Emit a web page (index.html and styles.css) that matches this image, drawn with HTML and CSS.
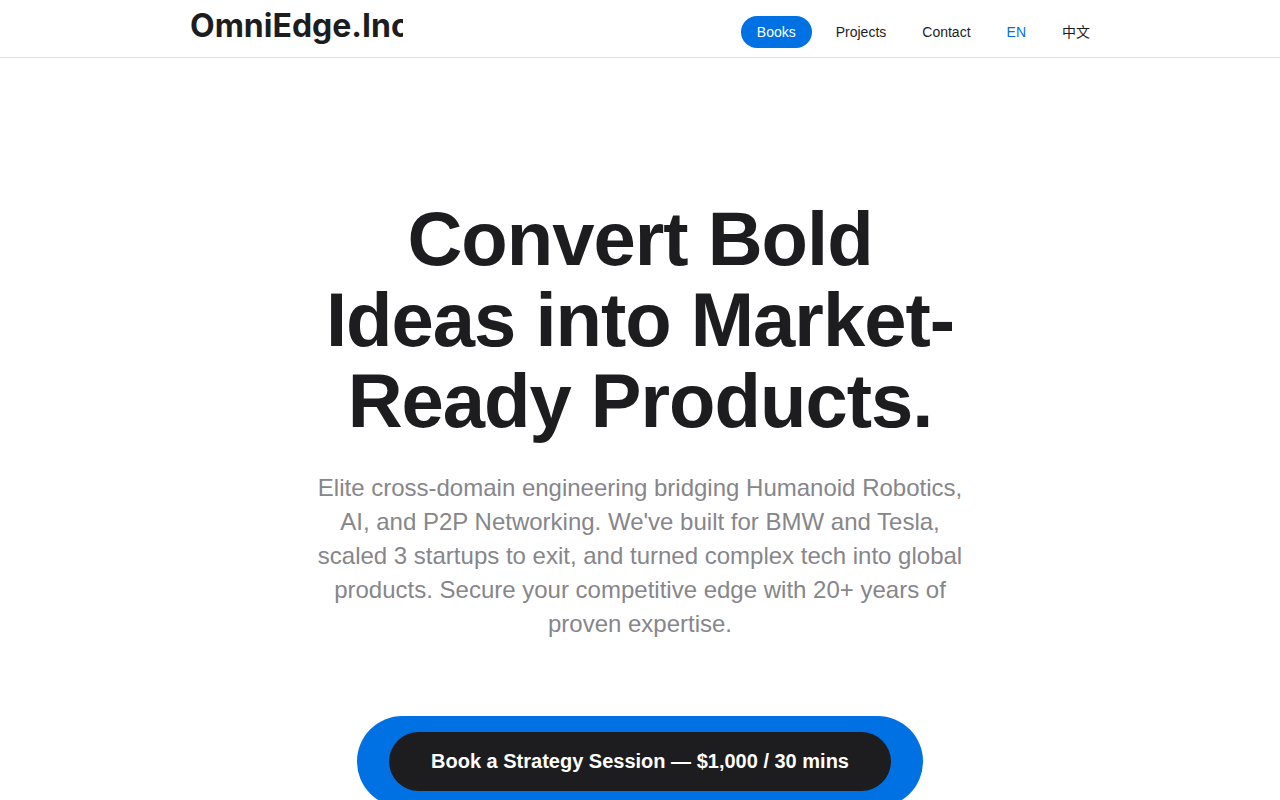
FILE: index.html
```html
<!DOCTYPE html>
<html lang="en">
<head>
    <meta charset="UTF-8">
    <meta name="viewport" content="width=device-width, initial-scale=1.0">
    <title>OmniEdge.Inc</title>
    <link rel="stylesheet" href="styles.css">
</head>
<body>
    <header class="site-header">
        <div class="header-inner">
            <a class="logo" href="#">OmniEdge.Inc</a>
            <nav class="nav">
                <a class="nav-pill" href="#books">Books</a>
                <div class="nav-links">
                    <a href="#projects">Projects</a>
                    <a href="#contact">Contact</a>
                    <a class="active" href="#en">EN</a>
                    <a href="#zh" lang="zh">中文</a>
                </div>
            </nav>
        </div>
    </header>

    <main class="hero">
        <h1>Convert Bold Ideas into Market-Ready Products.</h1>
        <p>Elite cross-domain engineering bridging Humanoid Robotics, AI, and P2P Networking. We've built for BMW and Tesla, scaled 3 startups to exit, and turned complex tech into global products. Secure your competitive edge with 20+ years of proven expertise.</p>
        <div class="cta">
            <a class="cta-button" href="#book">Book a Strategy Session — $1,000 / 30 mins</a>
        </div>
    </main>
</body>
</html>
```
FILE: styles.css
```css
* {
    box-sizing: border-box;
}

body {
    margin: 0;
    background-color: #fff;
    color: #1d1d1f;
    font-family: "Liberation Sans", "Noto Sans CJK SC", sans-serif;
}

a {
    color: inherit;
    text-decoration: none;
}

.site-header {
    border-bottom: 1px solid #e0e0e0;
}

.header-inner {
    display: flex;
    justify-content: space-between;
    max-width: 900px;
    margin: 0 auto;
}

.logo {
    width: 213px;
    padding-top: 8px;
    overflow: hidden;
    font-family: Inter, sans-serif;
    font-size: 32px;
    font-weight: 700;
    line-height: 36px;
    white-space: nowrap;
}

.nav {
    display: flex;
    align-items: center;
    gap: 24px;
    padding: 16px 0 9px;
    font-size: 14px;
    line-height: 16px;
}

.nav-pill {
    padding: 8px 16px;
    border-radius: 16px;
    background-color: #0071e3;
    color: #fff;
}

.nav-links {
    display: flex;
    gap: 36px;
}

.nav-links .active {
    color: #0071e3;
}

.hero {
    display: flex;
    flex-direction: column;
    align-items: center;
    padding: 140px 20px 100px;
    text-align: center;
}

.hero h1 {
    max-width: 660px;
    margin: 0 0 30px;
    font-size: 76px;
    font-weight: 700;
    line-height: 81px;
    letter-spacing: -1px;
}

.hero p {
    max-width: 660px;
    margin: 0 0 75px;
    color: #86868b;
    font-size: 24px;
    line-height: 34px;
}

.cta {
    padding: 16px 32px;
    border-radius: 46px;
    background-color: #0071e3;
}

.cta-button {
    display: block;
    padding: 18px 42px;
    border-radius: 30px;
    background-color: #1d1d1f;
    color: #fff;
    font-size: 20px;
    font-weight: 700;
    line-height: 23px;
}
```
